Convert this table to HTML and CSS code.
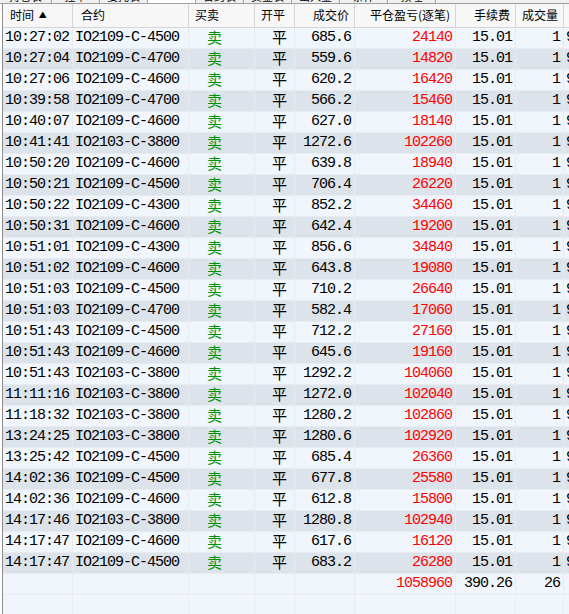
FILE: index.html
```html
<!DOCTYPE html>
<html lang="zh-CN">
<head>
<meta charset="utf-8">
<title>成交记录</title>
<link rel="stylesheet" href="styles.css">
</head>
<body>
<div class="tabs">
  <div class="tab first"><span>持仓表</span></div>
  <div class="tab"><span>挂单</span></div>
  <div class="tab"><span>委托表</span></div>
  <div class="tab active"><span></span></div>
  <div class="tab"><span>合约表</span></div>
  <div class="tab"><span>资金表</span></div>
  <div class="tab"><span>出入金</span></div>
  <div class="tab"><span>条件</span></div>
  <div class="tab"><span>预埋</span></div>
</div>
<div class="view">
  <div class="grid">
    <div class="row head">
      <div class="h l1">时间 <span class="tri">▲</span></div>
      <div class="h l2">合约</div>
      <div class="h l3">买卖</div>
      <div class="h l3">开平</div>
      <div class="h r">成交价</div>
      <div class="h r">平仓盈亏(逐笔)</div>
      <div class="h r">手续费</div>
      <div class="h r">成交量</div>
      <div class="h l3">成交编号</div>
    </div>
    <div id="rows"></div>
    <div class="row total">
      <div class="c"></div><div class="c"></div><div class="c"></div><div class="c"></div><div class="c"></div>
      <div class="c num red">1058960</div>
      <div class="c num">390.26</div>
      <div class="c num">26</div>
      <div class="c"></div>
    </div>
    <div class="row total">
      <div class="c"></div><div class="c"></div><div class="c"></div><div class="c"></div><div class="c"></div>
      <div class="c"></div><div class="c"></div><div class="c"></div><div class="c"></div>
    </div>
  </div>
</div>
<script src="app.js"></script>
</body>
</html>
```
FILE: styles.css
```css
html, body {
  margin: 0;
  padding: 0;
  background: #ffffff;
  overflow: hidden;
}
body {
  width: 569px;
  height: 614px;
  font-family: "Liberation Mono", "DejaVu Sans Mono", monospace;
}
.tabs {
  display: flex;
  height: 3px;
  overflow: hidden;
  background: #f0f0f0;
  border-bottom: 1px solid #a0a0a0;
}
.tab {
  flex: 0 0 48px;
  box-sizing: border-box;
  border-right: 1px solid #a0a0a0;
  overflow: hidden;
  font-family: "Noto Sans CJK SC", sans-serif;
  font-size: 11px;
  line-height: 12px;
  color: #000;
  text-align: center;
  white-space: nowrap;
}
.tab.first { flex-basis: 52px; }
.tab.active { background: #ffffff; }
.tab span {
  display: block;
  margin-top: -10px;
}
.view {
  margin-left: 2px;
  border-left: 1px solid #8c8c8c;
  overflow: hidden;
  height: 620px;
}
.grid { width: 660px; }
.row {
  display: grid;
  grid-template-columns: 70px 116px 66px 40px 60px 101px 60px 48px 99px;
  height: 21px;
  background: #f1f6fd;
}
.row.alt { background: #dde3ea; }
.row.head {
  height: 24px;
  background: #f7f7f7;
}
.h {
  box-sizing: border-box;
  border-right: 1px solid #d5d5d5;
  border-bottom: 1px solid #d5d5d5;
  font-family: "Noto Sans CJK SC", sans-serif;
  font-size: 12px;
  line-height: 22px;
  color: #000;
  white-space: nowrap;
  overflow: hidden;
}
.h.l1 { padding-left: 7px; }
.h.l2 { padding-left: 8px; }
.h.l3 { padding-left: 6px; }
.h.r { text-align: right; padding-right: 5px; }
.tri {
  font-size: 8px;
  vertical-align: 2px;
  margin-left: 2px;
}
.c {
  box-sizing: border-box;
  border-right: 1px solid #e8ebef;
  border-bottom: 1px solid #e8ebef;
  font-size: 15px;
  letter-spacing: -1px;
  line-height: 19px;
  color: #000;
  white-space: nowrap;
  overflow: hidden;
}
.c.txt { padding-left: 2px; }
.c.num { text-align: right; padding-right: 3px; }
.c.cn {
  font-family: "Noto Sans CJK SC", sans-serif;
  font-size: 15px;
  letter-spacing: 0;
  line-height: 17px;
}
.c.sell { color: #009000; padding-left: 18px; }
.c.flat { padding-left: 17px; }
.c.red { color: #ff0000; }
.c.id { padding-left: 2px; }
```
FILE: app.js
```javascript
var data = [
  ["10:27:02","IO2109-C-4500","685.6","24140"],
  ["10:27:04","IO2109-C-4700","559.6","14820"],
  ["10:27:06","IO2109-C-4600","620.2","16420"],
  ["10:39:58","IO2109-C-4700","566.2","15460"],
  ["10:40:07","IO2109-C-4600","627.0","18140"],
  ["10:41:41","IO2103-C-3800","1272.6","102260"],
  ["10:50:20","IO2109-C-4600","639.8","18940"],
  ["10:50:21","IO2109-C-4500","706.4","26220"],
  ["10:50:22","IO2109-C-4300","852.2","34460"],
  ["10:50:31","IO2109-C-4600","642.4","19200"],
  ["10:51:01","IO2109-C-4300","856.6","34840"],
  ["10:51:02","IO2109-C-4600","643.8","19080"],
  ["10:51:03","IO2109-C-4500","710.2","26640"],
  ["10:51:03","IO2109-C-4700","582.4","17060"],
  ["10:51:43","IO2109-C-4500","712.2","27160"],
  ["10:51:43","IO2109-C-4600","645.6","19160"],
  ["10:51:43","IO2103-C-3800","1292.2","104060"],
  ["11:11:16","IO2103-C-3800","1272.0","102040"],
  ["11:18:32","IO2103-C-3800","1280.2","102860"],
  ["13:24:25","IO2103-C-3800","1280.6","102920"],
  ["13:25:42","IO2109-C-4500","685.4","26360"],
  ["14:02:36","IO2109-C-4500","677.8","25580"],
  ["14:02:36","IO2109-C-4600","612.8","15800"],
  ["14:17:46","IO2103-C-3800","1280.8","102940"],
  ["14:17:47","IO2109-C-4600","617.6","16120"],
  ["14:17:47","IO2109-C-4500","683.2","26280"]
];
var ids = ["9120","9121","9122","9135","9136","9140","9152","9153","9154","9158","9160","9161","9162","9163","9170","9171","9172","9210","9233","9301","9302","9344","9345","9388","9389","9390"];
var host = document.getElementById("rows");
var html = "";
for (var i = 0; i < data.length; i++) {
  var d = data[i];
  html += '<div class="row' + (i % 2 ? ' alt' : '') + '">' +
    '<div class="c txt">' + d[0] + '</div>' +
    '<div class="c txt">' + d[1] + '</div>' +
    '<div class="c cn sell">卖</div>' +
    '<div class="c cn flat">平</div>' +
    '<div class="c num">' + d[2] + '</div>' +
    '<div class="c num red">' + d[3] + '</div>' +
    '<div class="c num">15.01</div>' +
    '<div class="c num">1</div>' +
    '<div class="c id">' + ids[i] + '</div>' +
    '</div>';
}
host.innerHTML = html;
```
